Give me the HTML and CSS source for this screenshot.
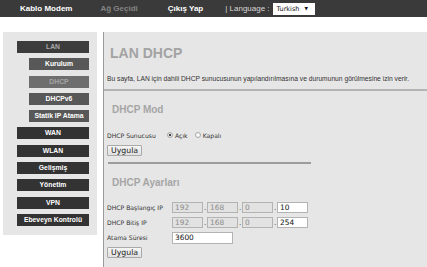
FILE: index.html
```html
<!DOCTYPE html>
<html lang="tr">

<head>
    <meta charset="UTF-8">
    <meta name="viewport" content="width=device-width, initial-scale=1.0">
    <title>LAN DHCP</title>
    <link rel="stylesheet" href="styles.css">
</head>

<body>
    <header class="topbar">
        <span class="nav-item nav-modem">Kablo Modem</span>
        <span class="nav-item nav-gateway">Ağ Geçidi</span>
        <span class="nav-item nav-logout">Çıkış Yap</span>
        <span class="lang-label">| Language :</span>
        <div class="lang-select">Turkish <span class="arrow">▼</span></div>
    </header>

    <div class="main">
        <!-- Side menu -->
        <nav class="sidebar">
            <a class="menu active">LAN</a>
            <a class="menu sub">Kurulum</a>
            <a class="menu sub current">DHCP</a>
            <a class="menu sub">DHCPv6</a>
            <a class="menu sub">Statik IP Atama</a>
            <a class="menu">WAN</a>
            <a class="menu">WLAN</a>
            <a class="menu">Gelişmiş</a>
            <a class="menu">Yönetim</a>
            <a class="menu">VPN</a>
            <a class="menu">Ebeveyn Kontrolü</a>
        </nav>

        <!-- Page content -->
        <section class="content">
            <h1>LAN DHCP</h1>
            <p class="desc">Bu sayfa, LAN için dahili DHCP sunucusunun yapılandırılmasına ve durumunun görülmesine izin verir.</p>
            <div class="rule"></div>

            <h2>DHCP Mod</h2>
            <form class="form">
                <div class="radio-row">
                    <span class="label">DHCP Sunucusu</span>
                    <label class="radio"><input type="radio" name="dhcp" checked> Açık</label>
                    <label class="radio"><input type="radio" name="dhcp"> Kapalı</label>
                </div>
                <button type="button" class="btn btn-mode">Uygula</button>
            </form>
            <div class="rule short"></div>

            <h2>DHCP Ayarları</h2>
            <form class="form settings">
                <div class="field-row">
                    <span class="label">DHCP Başlangıç IP</span>
                    <input class="ip" value="192" disabled><span class="dot">.</span>
                    <input class="ip" value="168" disabled><span class="dot">.</span>
                    <input class="ip" value="0" disabled><span class="dot">.</span>
                    <input class="ip" value="10">
                </div>
                <div class="field-row">
                    <span class="label">DHCP Bitiş IP</span>
                    <input class="ip" value="192" disabled><span class="dot">.</span>
                    <input class="ip" value="168" disabled><span class="dot">.</span>
                    <input class="ip" value="0" disabled><span class="dot">.</span>
                    <input class="ip" value="254">
                </div>
                <div class="field-row">
                    <span class="label">Atama Süresi</span>
                    <input class="lease" value="3600">
                </div>
                <button type="button" class="btn btn-settings">Uygula</button>
            </form>
        </section>
    </div>
</body>

</html>
```

FILE: styles.css
```css
body {
    font-family: "Liberation Sans", Arial, sans-serif;
    margin: 0;
    padding: 0;
    background-color: white;
    color: #222;
}

/* top navigation */
.topbar {
    display: flex;
    align-items: center;
    height: 17px;
    background-color: #3a3a3a;
    padding-left: 20px;
    font-size: 8px;
    white-space: nowrap;
}

.nav-item {
    font-weight: bold;
    color: white;
}

.nav-gateway {
    margin-left: 28px;
    color: #858585;
}

.nav-logout {
    margin-left: 30px;
}

.lang-label {
    margin-left: 22px;
    color: #d8d8d8;
}

.lang-select {
    display: flex;
    align-items: center;
    margin-left: 3px;
    height: 12px;
    width: 38px;
    padding-left: 4px;
    background-color: white;
    color: #111;
    font-family: "DejaVu Sans", sans-serif;
    font-size: 6.5px;
}

.lang-select .arrow {
    font-size: 4.5px;
    margin-left: 5px;
}

/* layout */
.main {
    display: flex;
    align-items: flex-start;
    margin-top: 15px;
}

.sidebar {
    display: flex;
    flex-direction: column;
    align-items: flex-end;
    gap: 5.3px;
    width: 94px;
    margin-left: 3px;
    padding: 9px 8px 9px 0;
    box-sizing: border-box;
    background-color: #e6e6e6;
}

.menu {
    display: block;
    width: 72px;
    height: 12px;
    line-height: 12px;
    background-color: #333;
    color: white;
    font-size: 6.8px;
    font-weight: bold;
    text-align: center;
}

.menu.active {
    background-color: #3c3c3c;
    color: #a8a8a8;
}

.menu.sub {
    width: 60px;
    background-color: #585858;
}

.menu.sub.current {
    background-color: #6e6e6e;
    color: #a5a5a5;
}

.content {
    flex: 1;
    margin-left: 6px;
    min-height: 240px;
    background-color: #e6e6e6;
    border-left: 1px solid #9a9a9a;
}

h1 {
    margin: 13px 0 0 6px;
    font-size: 14px;
    line-height: 16px;
    color: #a3a3a3;
}

.desc {
    margin: 14px 0 0 3px;
    font-size: 6.7px;
    line-height: 8px;
    color: #333;
    white-space: nowrap;
}

.rule {
    height: 2px;
    margin-top: 6px;
    background-color: #b4b4b4;
}

.rule.short {
    width: 203px;
    margin-left: 4px;
    background-color: #9c9c9c;
}

h2 {
    margin: 13px 0 0 8px;
    font-size: 10px;
    line-height: 12px;
    color: #a5a5a5;
}

/* forms */
.form {
    margin-left: 3px;
    font-family: "DejaVu Sans", sans-serif;
    font-size: 6.1px;
    color: #333;
}

.radio-row {
    display: flex;
    align-items: center;
    height: 10px;
    margin-top: 14px;
}

.label {
    display: inline-block;
    width: 65px;
}

.radio-row .label {
    width: 60px;
}

.radio {
    display: flex;
    align-items: center;
    gap: 2px;
    margin-right: 7px;
}

.radio input {
    appearance: none;
    width: 6px;
    height: 6px;
    margin: 0;
    border: 1px solid #aaa;
    border-radius: 50%;
    background: radial-gradient(circle, #fff 40%, #ddd 100%);
}

.radio input:checked {
    background: radial-gradient(circle, #444 35%, #eee 45%, #ccc 100%);
}

.btn {
    display: block;
    width: 35px;
    height: 11px;
    padding: 0;
    border: 1px solid #a9a9a9;
    border-radius: 1px;
    background: linear-gradient(#f6f6f6, #e0e0e0);
    color: #222;
    font-family: "DejaVu Sans", sans-serif;
    font-size: 7.8px;
    line-height: 9px;
}

.btn-mode {
    margin-top: 5px;
}

.settings {
    margin-top: 13px;
}

.field-row {
    display: flex;
    align-items: center;
    height: 11px;
    margin-bottom: 4px;
}

.field-row input {
    height: 11px;
    box-sizing: border-box;
    margin: 0;
    padding: 0 2px;
    border: 1px solid #b3b3b3;
    background-color: white;
    color: #111;
    font-family: "DejaVu Sans", sans-serif;
    font-size: 7.4px;
}

.field-row input:disabled {
    background-color: #e2e2e2;
    color: #8a8a8a;
}

.ip {
    width: 31px;
}

.lease {
    width: 61px;
}

.field-row:last-of-type input {
    height: 12px;
}

.dot {
    display: inline-block;
    width: 4px;
    text-align: center;
    font-size: 7px;
    line-height: 12px;
}

.btn-settings {
    margin-top: 4px;
}
```
